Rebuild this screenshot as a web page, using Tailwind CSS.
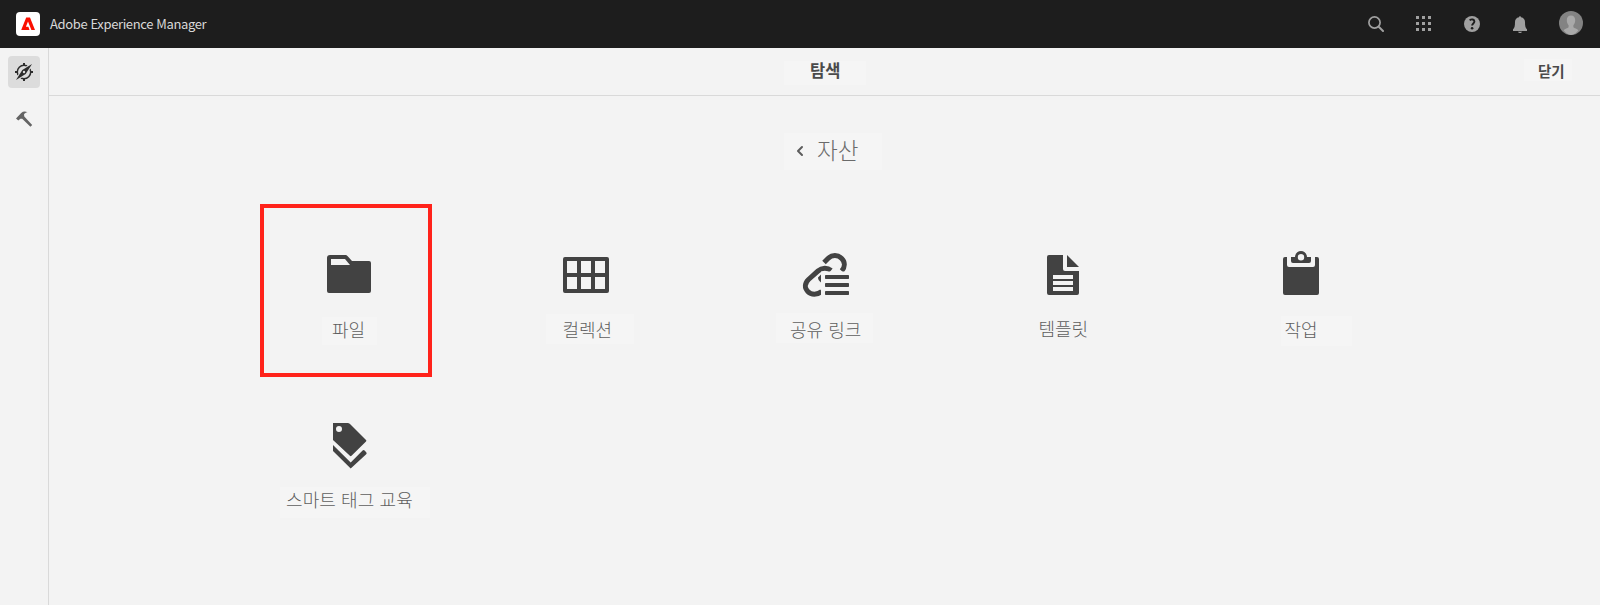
<!DOCTYPE html>
<html lang="ko">
<head>
<meta charset="utf-8">
<title>Adobe Experience Manager</title>
<script src="https://cdn.jsdelivr.net/npm/@tailwindcss/browser@4"></script>
</head>
<body class="flex h-[605px] w-[1600px] flex-col overflow-hidden bg-[#f3f3f3] font-['Noto_Sans_CJK_KR',sans-serif]">
<header class="flex h-12 shrink-0 items-center bg-[#1d1d1d] pl-4 pr-[17px]">
  <svg class="size-6" viewBox="0 0 24 24"><rect width="24" height="24" rx="4" fill="#fff"/><path fill="#fa0f00" d="M5.2 18 10.2 5.6h3.8L19 18h-3.6L12 9.6l-2.1 5.2h2.5l1.1 3.2Z"/></svg>
  <h1 class="ml-[10px] whitespace-nowrap text-[13px] leading-5 tracking-[-0.37px] text-[#d8d8d8]">Adobe Experience Manager</h1>
  <div class="ml-auto flex items-center">
    <svg class="size-4" viewBox="0 0 16 16" fill="none" stroke="#a0a0a0"><circle cx="6.5" cy="6.500" r="5.600" stroke-width="1.700"/><path stroke-width="2" stroke-linecap="round" d="m11 11 4 4"/></svg>
    <svg class="ml-8 size-4" viewBox="0 0 16 16" fill="#a0a0a0"><path d="M0 0h3v3H0zM6 0h3v3H6zM12 0h3v3h-3zM0 6h3v3H0zM6 6h3v3H6zM12 6h3v3h-3zM0 12h3v3H0zM6 12h3v3H6zM12 12h3v3h-3z"/></svg>
    <svg class="ml-8 size-4" viewBox="0 0 16 16"><circle cx="8" cy="8" r="8" fill="#a0a0a0"/><path d="M5.600 4.200C7.800 2.700 10.400 3.400 10.400 5.600c0 1.800-2.300 2-2.300 4" fill="none" stroke="#1d1d1d" stroke-width="1.900"/><circle cx="8.100" cy="12.200" r="1.300" fill="#1d1d1d"/></svg>
    <svg class="ml-8 h-[17px] w-4" viewBox="0 0 16 17" fill="#a0a0a0"><path d="M7 1.300C7 0 9 0 9 1.300c2.700.5 4 2.300 4 4.700 0 4 .5 6 2 7.300V15H1v-1.700C2.500 12 3 10 3 6c0-2.400 1.300-4.200 4-4.700ZM6 15.700h4c-.4 1.700-3.600 1.700-4 0Z"/></svg>
    <svg class="-mt-[2px] ml-[31px] size-6" viewBox="0 0 24 24"><circle cx="12" cy="12" r="12" fill="#838383"/><path fill="#a9a9a9" d="M12 4.500c2.700 0 4.200 2 4.200 4.800 0 2-.7 3.900-1.800 5v2c1 1.200 3.600 1.300 5 2.900A12 12 0 0 1 12 24a12 12 0 0 1-7.400-4.800c1.400-1.600 4-1.700 5-2.900v-2c-1.100-1.100-1.800-3-1.800-5 0-2.800 1.500-4.800 4.200-4.800Z"/></svg>
  </div>
</header>
<div class="flex min-h-0 flex-1">
  <nav class="flex w-[49px] shrink-0 flex-col items-start border-r border-[#d9d9d9] pl-2 pt-2">
    <div class="flex size-8 items-center justify-center rounded bg-[#dcdcdc]">
      <svg class="size-[18px]" viewBox="0 0 18 18"><circle cx="9" cy="9" r="6.700" fill="none" stroke="#2c2c2c" stroke-width="1.500"/><path stroke="#2c2c2c" stroke-width="2" d="M9 0v2.500M9 15.500V18M0 9h2.500M15.500 9H18"/><path stroke="#dcdcdc" stroke-width="4.500" d="m1.500 16.500 15-15"/><path fill="#2c2c2c" d="M17 1 10.700 10.900 1 17 7.300 7.100Z"/><circle cx="9" cy="9" r="1.200" fill="#dcdcdc"/></svg>
    </div>
    <svg class="ml-[7px] mt-[23px] size-[18px]" viewBox="0 0 18 18" fill="#646464"><path d="M1 7.500 6.200 2C8 .4 10 .2 12.500 1.200 10.500 1.500 9.300 2.400 9 3.700L9.300 5.600 17.200 13.900 15.400 15.800 7.200 7.800 5.400 7.800 3.300 9.600Z"/></svg>
  </nav>
  <main class="flex flex-1 flex-col">
    <div class="flex h-12 shrink-0 items-start border-b border-[#d9d9d9] pl-[735px] pr-7 pt-[11px] text-[#4a4a4a]">
      <h2 class="mt-[2px] h-6 w-[82px] bg-[#f5f5f5] pl-[26px] text-[16.5px] font-bold leading-[18px]">탐색</h2>
      <button class="ml-auto h-[22px] w-12 bg-[#f5f5f5] pl-[14px] text-left text-[14.5px] font-bold leading-[19px]">닫기</button>
    </div>
    <div class="ml-[735px] mt-[37px] flex h-[37px] w-[98px] items-start bg-[#f5f5f5] pl-3 text-[#6a6a6a]">
      <svg class="mt-3 h-3 w-2" viewBox="0 0 8 12" fill="none" stroke="#5c5c5c" stroke-width="2" stroke-linecap="round" stroke-linejoin="round"><path d="M6 2 2 6l4 4"/></svg>
      <span class="ml-[13px] text-[22.5px] font-light leading-[33px]">자산</span>
    </div>
    <div class="ml-[181px] mt-[34px] grid grid-cols-[repeat(5,238px)] text-[18px] font-light leading-[27px] text-[#5e5e5e]">
      <a class="relative flex h-[170px] flex-col pt-[46px]">
        <span class="absolute left-[30px] top-0 h-[173px] w-[172px] border-4 border-[#ff221a]"></span>
        <svg class="ml-[95px] size-12" viewBox="0 0 48 48" fill="#424242"><path fill-rule="evenodd" d="M5 5h15c1.200 0 2 .4 2.700 1.200L27 11h17q2 0 2 2v28q0 2-2 2H4q-2 0-2-2V8q0-3 3-3ZM6 9v6h19l-5-6Z"/></svg>
        <span class="ml-[92px] mt-[19px] h-7 w-[55px] bg-[#f5f5f5] pl-[10px] leading-[24px]">파일</span>
      </a>
      <a class="flex h-[170px] flex-col pt-[46px]">
        <svg class="ml-[95px] size-12" viewBox="0 0 48 48" fill="#424242"><path fill-rule="evenodd" d="M2 7h42q2 0 2 2v32q0 2-2 2H2q-2 0-2-2V9q0-2 2-2ZM4 11v12h10V11ZM18 11v12h10V11ZM32 11v12h10V11ZM4 27v12h10V27ZM18 27v12h10V27ZM32 27v12h10V27Z"/></svg>
        <span class="ml-[78px] mt-4 h-[30px] w-[88px] bg-[#f5f5f5] pl-[16.5px] leading-[30px]">컬렉션</span>
      </a>
      <a class="flex h-[170px] flex-col pt-[46px]">
        <svg class="ml-[95px] size-12" viewBox="0 0 48 48"><g fill="none" stroke="#424242" stroke-width="5"><path d="M23 12.500 27 8.500C31 4.500 37 4.700 40.700 8.500c3.500 3.500 3.500 8.500 0 12.500"/><path d="M30 20.500c-3.500-3-9-3-13 .5L7.500 29.500c-4 4-4 8.500-.7 12s9.500 3.500 14 0"/></g><path fill="#f3f3f3" d="M20 21.500h28V48H20z"/><g fill="#424242"><path d="M20 24.500v8c-2-1.500-2.800-3-3-5Z"/><rect x="24" y="25" width="24" height="4" rx=".7"/><rect x="24" y="33" width="24" height="4" rx=".7"/><rect x="24" y="41" width="24" height="4" rx=".7"/></g></svg>
        <span class="ml-[70px] mt-[15px] h-[30px] w-[97px] whitespace-nowrap bg-[#f5f5f5] pl-[14px] leading-[32px]">공유 링크</span>
      </a>
      <a class="flex h-[170px] flex-col pt-[46px]">
        <svg class="ml-[95px] size-12" viewBox="0 0 48 48" fill="#424242"><path fill-rule="evenodd" d="M10 5h14v14q0 2 2 2h14v22q0 2-2 2H10q-2 0-2-2V7q0-2 2-2ZM14 25v4h20v-4ZM14 31v4h20v-4ZM14 37v4h20v-4Z"/><path d="m28 5 12 12H28Z"/></svg>
        <span class="ml-[93px] mt-4 h-[30px] whitespace-nowrap pl-[1.5px] leading-[28px]">템플릿</span>
      </a>
      <a class="flex h-[170px] flex-col pt-[46px]">
        <svg class="ml-[95px] size-12" viewBox="0 0 48 48" fill="#424242"><path d="M8 7h2v8q0 2 2 2h24q2 0 2-2V7h2q2 0 2 2v34q0 2-2 2H8q-2 0-2-2V9q0-2 2-2Z"/><path fill-rule="evenodd" d="M14 7h4c.5-8 11.500-8 12 0h4v4q0 2-2 2H16q-2 0-2-2ZM24 4a3.200 3.200 0 1 0 0 6.400A3.200 3.200 0 0 0 24 4Z"/></svg>
        <span class="ml-[99px] mt-[18px] h-[30px] w-[71px] bg-[#f5f5f5] pl-[3.5px] leading-[26px]">작업</span>
      </a>
      <a class="flex h-[170px] flex-col pt-[46px]">
        <svg class="ml-[95px] size-12 overflow-visible" viewBox="0 0 48 48" fill="#424242"><path fill-rule="evenodd" d="M8 3h14.500q1.500 0 2.500 1l16 16q.8.800 0 1.600L26.500 35.800q-.8.800-1.600 0L8 20ZM14 6a3 3 0 1 0 0 6 3 3 0 0 0 0-6Z"/><path d="m8 25 17.700 17.500L37.600 30.600q1-1 2 0l1.600 1.600q1 1 0 2L25.700 48.500 8 31Z"/></svg>
        <span class="ml-[50px] mt-[19px] h-[31px] w-[150px] whitespace-nowrap bg-[#f5f5f5] pl-[6px] leading-[25px] tracking-[0.1px]">스마트 태그 교육</span>
      </a>
    </div>
  </main>
</div>
</body>
</html>
